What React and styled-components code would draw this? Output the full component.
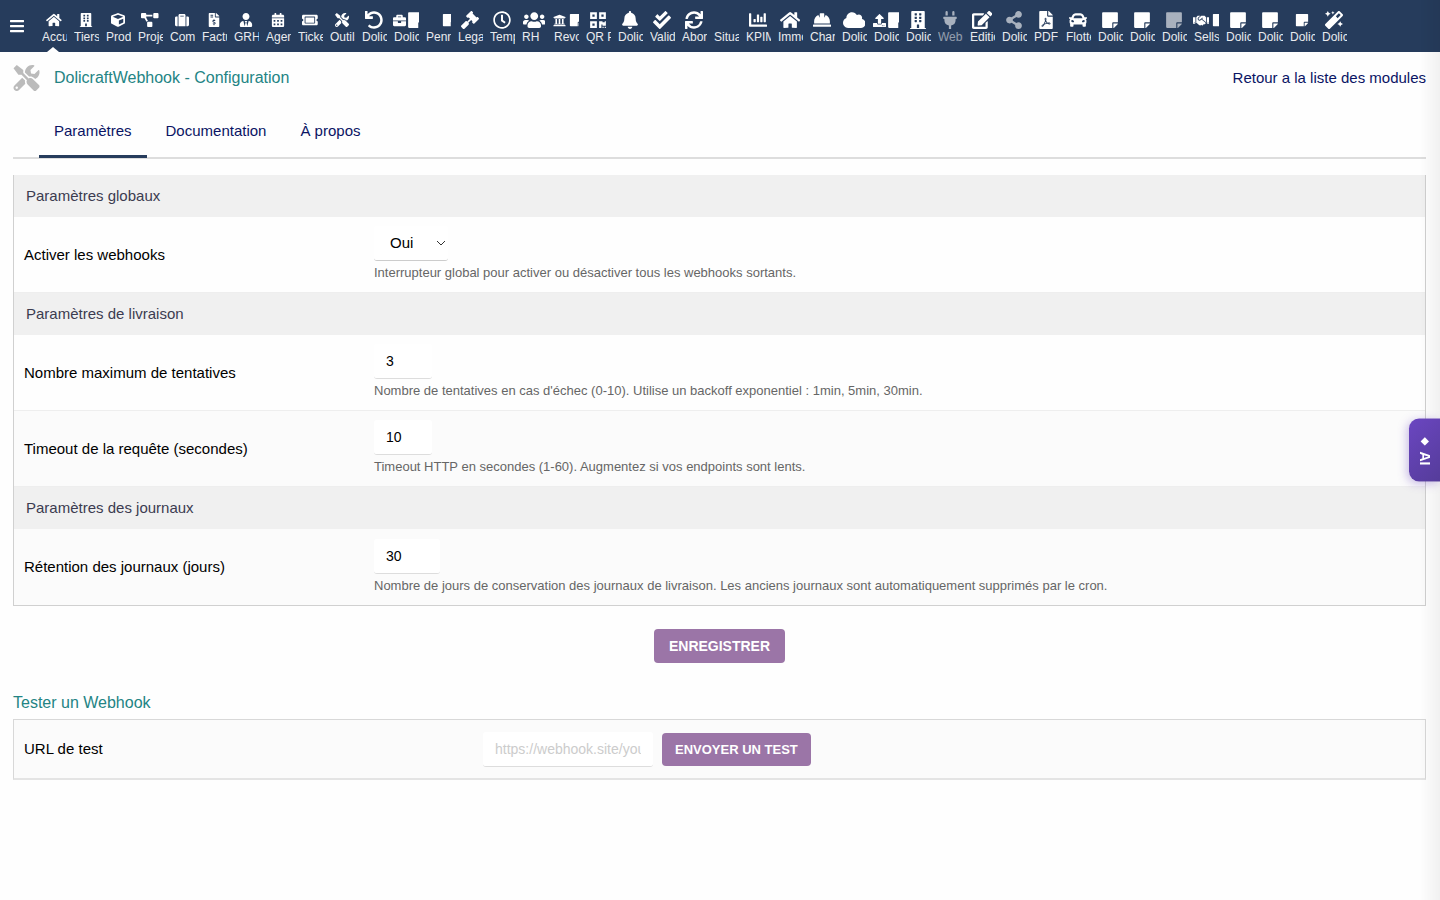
import React, { useState } from 'react'
import styled, { createGlobalStyle } from 'styled-components'
import {
  FaHome,
  FaBuilding,
  FaCube,
  FaProjectDiagram,
  FaSuitcase,
  FaFileInvoiceDollar,
  FaUserTie,
  FaCalendarAlt,
  FaTicketAlt,
  FaTools,
  FaUndo,
  FaBriefcase,
  FaStickyNote,
  FaGavel,
  FaRegClock,
  FaUsers,
  FaUniversity,
  FaQrcode,
  FaBell,
  FaCheckDouble,
  FaSync,
  FaChartBar,
  FaHardHat,
  FaCloud,
  FaUpload,
  FaPlug,
  FaEdit,
  FaShareAlt,
  FaFilePdf,
  FaCar,
  FaHandshake,
  FaMagic,
  FaBars,
} from 'react-icons/fa'

// ratio: width / height of the icons that are wider than a square
const menu = [
  { label: 'Accu', icons: [FaHome], size: 14, ratio: 1.125, active: true },
  { label: 'Tiers', icons: [FaBuilding], size: 14 },
  { label: 'Prod', icons: [FaCube], size: 14 },
  { label: 'Proje', icons: [FaProjectDiagram], size: 14, ratio: 1.25 },
  { label: 'Com', icons: [FaSuitcase], size: 14 },
  { label: 'Factu', icons: [FaFileInvoiceDollar], size: 14 },
  { label: 'GRH', icons: [FaUserTie], size: 14 },
  { label: 'Agen', icons: [FaCalendarAlt], size: 14 },
  { label: 'Ticke', icons: [FaTicketAlt], size: 14, ratio: 1.125 },
  { label: 'Outils', icons: [FaTools], size: 14 },
  { label: 'Dolic', icons: [FaUndo], size: 18 },
  { label: 'Dolic', icons: [FaBriefcase, FaStickyNote], size: 18 },
  { label: 'Penn', icons: [null, FaStickyNote], size: 14 },
  { label: 'Lega', icons: [FaGavel], size: 18 },
  { label: 'Temp', icons: [FaRegClock], size: 18 },
  { label: 'RH', icons: [FaUsers], size: 18, ratio: 1.25 },
  { label: 'Revo', icons: [FaUniversity, FaStickyNote], size: 14 },
  { label: 'QR P', icons: [FaQrcode], size: 18 },
  { label: 'Dolic', icons: [FaBell], size: 18 },
  { label: 'Valid', icons: [FaCheckDouble], size: 18 },
  { label: 'Abor', icons: [FaSync], size: 18 },
  { label: 'Situa', icons: [], size: 18 },
  { label: 'KPIM', icons: [FaChartBar], size: 18 },
  { label: 'Immo', icons: [FaHome], size: 18, ratio: 1.125 },
  { label: 'Char', icons: [FaHardHat], size: 18 },
  { label: 'Dolic', icons: [FaCloud], size: 18, ratio: 1.25 },
  { label: 'Dolic', icons: [FaUpload, FaStickyNote], size: 18 },
  { label: 'Dolic', icons: [FaBuilding], size: 18 },
  { label: 'Webh', icons: [FaPlug], size: 18, muted: true, mutedLabel: true },
  { label: 'Editio', icons: [FaEdit], size: 18, ratio: 1.125 },
  { label: 'Dolic', icons: [FaShareAlt], size: 18, muted: true },
  { label: 'PDF', icons: [FaFilePdf], size: 18 },
  { label: 'Flotte', icons: [FaCar], size: 18 },
  { label: 'Dolic', icons: [FaStickyNote], size: 18 },
  { label: 'Dolic', icons: [FaStickyNote], size: 18 },
  { label: 'Dolic', icons: [FaStickyNote], size: 18, muted: true },
  { label: 'Sells', icons: [FaHandshake, FaStickyNote], size: 14, ratio: 1.25 },
  { label: 'Dolic', icons: [FaStickyNote], size: 18 },
  { label: 'Dolic', icons: [FaStickyNote], size: 18 },
  { label: 'Dolic', icons: [FaStickyNote], size: 14 },
  { label: 'Dolic', icons: [FaMagic], size: 18 },
]

const tabs = ['Paramètres', 'Documentation', 'À propos']

const App = () => {
  const [tab, setTab] = useState('Paramètres')
  const [enabled, setEnabled] = useState('1')
  const [retries, setRetries] = useState('3')
  const [timeout, setTimeoutValue] = useState('10')
  const [retention, setRetention] = useState('30')
  const [url, setUrl] = useState('')

  return (
    <>
      <GlobalStyle />
      <Header>
        <MenuToggle type='button' aria-label='Menu'>
          <FaBars />
        </MenuToggle>
        <Nav>
          {menu.map((item, index) => (
            <MenuItem href='#' key={index} $active={item.active}>
              <MenuIcons
                $size={item.size}
                $ratio={item.ratio}
                $muted={item.muted}
                $pair={item.icons.length > 1}
              >
                {item.icons.map((Icon, i) =>
                  Icon ? <Icon key={i} /> : <EmptyIcon key={i} />
                )}
              </MenuIcons>
              <MenuLabel $muted={item.mutedLabel}>{item.label}</MenuLabel>
            </MenuItem>
          ))}
        </Nav>
      </Header>

      <Main>
        <TitleBar>
          <FaTools />
          <Title>DolicraftWebhook - Configuration</Title>
          <BackLink href='#'>Retour a la liste des modules</BackLink>
        </TitleBar>

        <Tabs>
          {tabs.map((name) => (
            <Tab
              href='#'
              key={name}
              $active={tab === name}
              onClick={() => setTab(name)}
            >
              {name}
            </Tab>
          ))}
        </Tabs>

        <form onSubmit={(event) => event.preventDefault()}>
          <Table>
            <tbody>
              <tr>
                <SectionCell colSpan={2}>Paramètres globaux</SectionCell>
              </tr>
              <Row>
                <LabelCell>
                  <label htmlFor='enabled'>Activer les webhooks</label>
                </LabelCell>
                <FieldCell>
                  <Select
                    id='enabled'
                    value={enabled}
                    onChange={(event) => setEnabled(event.target.value)}
                  >
                    <option value='1'>Oui</option>
                    <option value='0'>Non</option>
                  </Select>
                  <Help>
                    Interrupteur global pour activer ou désactiver tous les
                    webhooks sortants.
                  </Help>
                </FieldCell>
              </Row>
              <tr>
                <SectionCell colSpan={2}>Paramètres de livraison</SectionCell>
              </tr>
              <Row>
                <LabelCell>
                  <label htmlFor='retries'>Nombre maximum de tentatives</label>
                </LabelCell>
                <FieldCell>
                  <Input
                    id='retries'
                    value={retries}
                    onChange={(event) => setRetries(event.target.value)}
                  />
                  <Help>
                    Nombre de tentatives en cas d'échec (0-10). Utilise un
                    backoff exponentiel : 1min, 5min, 30min.
                  </Help>
                </FieldCell>
              </Row>
              <Row $shaded>
                <LabelCell>
                  <label htmlFor='timeout'>
                    Timeout de la requête (secondes)
                  </label>
                </LabelCell>
                <FieldCell>
                  <Input
                    id='timeout'
                    value={timeout}
                    onChange={(event) => setTimeoutValue(event.target.value)}
                  />
                  <Help>
                    Timeout HTTP en secondes (1-60). Augmentez si vos endpoints
                    sont lents.
                  </Help>
                </FieldCell>
              </Row>
              <tr>
                <SectionCell colSpan={2}>Paramètres des journaux</SectionCell>
              </tr>
              <Row $shaded>
                <LabelCell>
                  <label htmlFor='retention'>
                    Rétention des journaux (jours)
                  </label>
                </LabelCell>
                <FieldCell>
                  <Input
                    id='retention'
                    $width='66px'
                    value={retention}
                    onChange={(event) => setRetention(event.target.value)}
                  />
                  <Help>
                    Nombre de jours de conservation des journaux de livraison.
                    Les anciens journaux sont automatiquement supprimés par le
                    cron.
                  </Help>
                </FieldCell>
              </Row>
            </tbody>
          </Table>
          <Actions>
            <Button type='submit'>Enregistrer</Button>
          </Actions>
        </form>

        <SubTitle>Tester un Webhook</SubTitle>
        <TestForm onSubmit={(event) => event.preventDefault()}>
          <label htmlFor='url'>URL de test</label>
          <TestFields>
            <Input
              id='url'
              $width='170px'
              placeholder='https://webhook.site/your-id'
              value={url}
              onChange={(event) => setUrl(event.target.value)}
            />
            <Button type='submit' $small>
              Envoyer un test
            </Button>
          </TestFields>
        </TestForm>
      </Main>

      <SideShadow />
      <AiButton type='button'>
        <Diamond>◆</Diamond>
        <span>AI</span>
      </AiButton>
    </>
  )
}

export default App

const GlobalStyle = createGlobalStyle`
  * {
    box-sizing: border-box;
  }
  body {
    margin: 0;
    background: #fefefe;
    color: #000;
    font-family: 'Liberation Sans', Arial, sans-serif;
    font-size: 15px;
    line-height: 20px;
    overflow-x: hidden;
  }
  a {
    color: #0a1464;
    text-decoration: none;
  }
`
const Header = styled.header`
  display: flex;
  height: 52px;
  background: #263c5c;
`
const MenuToggle = styled.button`
  display: flex;
  align-items: center;
  justify-content: center;
  width: 34px;
  padding: 0;
  border: 0;
  background: none;
  color: #fff;
  font-size: 16px;
  cursor: pointer;
`
const Nav = styled.nav`
  display: flex;
  padding-left: 4px;
`
const MenuItem = styled.a`
  position: relative;
  display: flex;
  flex-direction: column;
  width: 32px;
  padding: 10px 3px 0 4px;
  color: #fff;
  &::after {
    content: '';
    display: ${(props) => (props.$active ? 'block' : 'none')};
    position: absolute;
    bottom: 0;
    left: 9px;
    border: 6px solid transparent;
    border-top: 0;
    border-bottom: 5px solid #fff;
  }
`
const MenuIcons = styled.span`
  display: flex;
  align-items: center;
  justify-content: ${(props) => (props.$pair ? 'flex-start' : 'center')};
  gap: ${(props) => (props.$size === 18 ? '1px' : '3px')};
  width: 26px;
  height: 20px;
  margin-left: -1px;
  overflow: hidden;
  font-size: ${(props) => props.$size}px;
  opacity: ${(props) => (props.$muted ? 0.6 : 1)};
  svg {
    flex-shrink: 0;
  }
  svg:first-child {
    width: ${(props) => props.$ratio || 1}em;
  }
  svg:first-child:not(:last-child) {
    font-size: 13px;
  }
`
const EmptyIcon = styled.span`
  flex-shrink: 0;
  width: 14px;
`
const MenuLabel = styled.span`
  width: 25px;
  overflow: hidden;
  white-space: nowrap;
  font-size: 12px;
  line-height: 14px;
  opacity: ${(props) => (props.$muted ? 0.5 : 0.9)};
`
const Main = styled.main`
  padding: 0 14px 0 13px;
`
const TitleBar = styled.div`
  display: flex;
  align-items: center;
  height: 52px;
  svg {
    width: 27px;
    height: 26px;
    color: #bbb;
  }
`
const Title = styled.h1`
  flex: 1;
  margin: 0;
  padding-left: 14px;
  color: #238484;
  font-size: 16px;
  font-weight: 400;
`
const BackLink = styled.a`
  color: #0a1464;
`
const Tabs = styled.nav`
  display: flex;
  height: 55px;
  padding-left: 26px;
  border-bottom: 2px solid #ddd;
  margin-bottom: 16px;
`
const Tab = styled.a`
  height: 54px;
  padding: 17px 15px 0;
  margin-right: 4px;
  border-bottom: 3px solid
    ${(props) => (props.$active ? '#263c5c' : 'transparent')};
`
const Table = styled.table`
  width: 100%;
  border: 1px solid #d0d0d0;
  border-top: 0;
  border-spacing: 0;
  tr:last-child td {
    border-bottom: 0;
  }
`
const SectionCell = styled.th`
  height: 42px;
  padding: 0 12px;
  background: #f0f0f0;
  color: #3c3c50;
  font-weight: 400;
  text-align: left;
`
const Row = styled.tr`
  height: 76px;
  background: ${(props) => (props.$shaded ? '#fbfbfb' : '#fefefe')};
`
const LabelCell = styled.td`
  width: 350px;
  padding: 0 10px;
  border-bottom: 1px solid #eee;
`
const FieldCell = styled.td`
  padding: 0 10px;
  border-bottom: 1px solid #eee;
`
const Select = styled.select`
  display: block;
  width: 74px;
  height: 35px;
  padding: 0 16px;
  border: 0;
  border-bottom: 1px solid #ccc;
  border-radius: 3px;
  appearance: none;
  background: #fff
    url("data:image/svg+xml,%3Csvg xmlns='http://www.w3.org/2000/svg' width='10' height='6' fill='none' stroke='%23333'%3E%3Cpath d='M1 1l4 4 4-4'/%3E%3C/svg%3E")
    no-repeat right 2px center;
  font: inherit;
`
const Input = styled.input`
  display: block;
  width: ${(props) => props.$width || '58px'};
  height: 35px;
  padding: 0 12px;
  border: 0;
  border-bottom: 1px solid #ddd;
  border-radius: 3px;
  background: #fff;
  font: inherit;
  font-size: 14px;
  &::placeholder {
    color: #ccc;
  }
`
const Help = styled.div`
  padding: 3px 0 1px;
  color: #666;
  font-size: 13px;
  line-height: 18px;
`
const Actions = styled.div`
  display: flex;
  justify-content: center;
  padding: 23px 0 30px;
`
const Button = styled.button`
  height: ${(props) => (props.$small ? '33px' : '34px')};
  padding: 0 ${(props) => (props.$small ? '13px' : '15px')};
  border: 0;
  border-radius: 4px;
  background: #9b75a7;
  color: #fff;
  font-family: inherit;
  font-size: ${(props) => (props.$small ? '13px' : '14px')};
  font-weight: 700;
  text-transform: uppercase;
  cursor: pointer;
`
const SubTitle = styled.h2`
  margin: 0;
  padding-bottom: 6px;
  color: #238484;
  font-size: 16px;
  font-weight: 400;
`
const TestForm = styled.form`
  display: grid;
  grid-template-columns: 33% 1fr;
  align-items: center;
  height: 61px;
  padding: 0 10px;
  border: 1px solid #d8d8d8;
  border-bottom: 2px solid #e4e4e4;
  background: #fbfbfb;
`
const TestFields = styled.div`
  display: flex;
  align-items: center;
  gap: 9px;
`
const SideShadow = styled.div`
  position: fixed;
  top: 0;
  right: 0;
  bottom: 0;
  width: 20px;
  background: linear-gradient(to right, transparent, rgba(0, 0, 0, 0.05));
  pointer-events: none;
`
const AiButton = styled.button`
  position: fixed;
  top: 50%;
  right: 0;
  transform: translateY(-50%);
  display: flex;
  align-items: center;
  justify-content: center;
  gap: 6px;
  width: 31px;
  height: 63px;
  padding: 0;
  border: 0;
  border-radius: 10px 0 0 10px;
  background: linear-gradient(135deg, #6b46c1, #553c9a);
  box-shadow: -2px 2px 10px rgba(107, 70, 193, 0.35);
  color: #fff;
  font-family: inherit;
  font-size: 14px;
  font-weight: 700;
  writing-mode: vertical-rl;
  cursor: pointer;
`
const Diamond = styled.span`
  font-size: 10px;
`
